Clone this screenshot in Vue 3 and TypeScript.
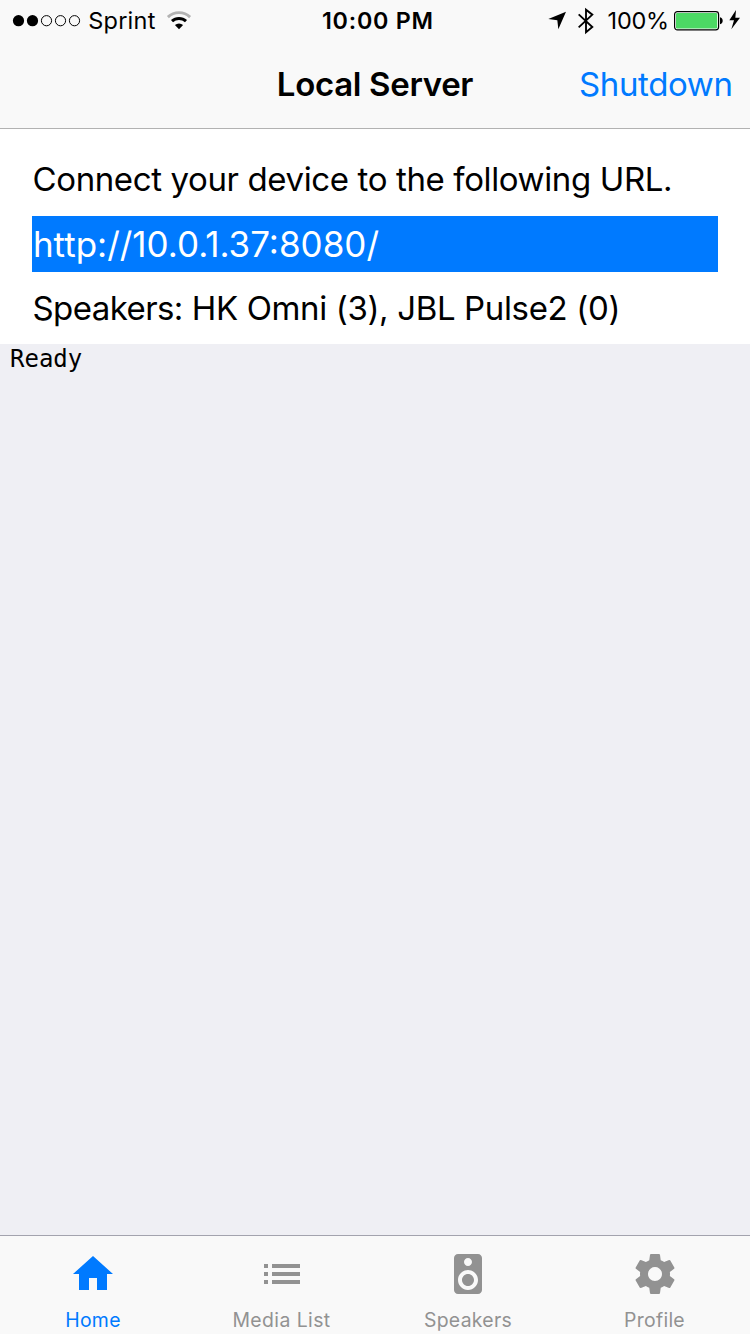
<script setup lang="ts">
import { ref } from 'vue'

interface Tab {
  id: string
  label: string
  icon: string
}

const tabs: Tab[] = [
  { id: 'home', label: 'Home', icon: 'M10 20v-6h4v6h5v-8h3L12 3 2 12h3v8z' },
  {
    id: 'media',
    label: 'Media List',
    icon: 'M3 13h2v-2H3v2zm0 4h2v-2H3v2zm0-8h2V7H3v2zm4 4h14v-2H7v2zm0 4h14v-2H7v2zM7 7v2h14V7H7z',
  },
  {
    id: 'speakers',
    label: 'Speakers',
    icon: 'M17 2H7c-1.1 0-2 .9-2 2v16c0 1.1.9 1.99 2 1.99L17 22c1.1 0 2-.9 2-2V4c0-1.1-.9-2-2-2zm-5 2c1.1 0 2 .9 2 2s-.9 2-2 2c-1.11 0-2-.9-2-2s.89-2 2-2zm0 16c-2.76 0-5-2.24-5-5s2.24-5 5-5 5 2.24 5 5-2.24 5-5 5zm0-8c-1.66 0-3 1.34-3 3s1.34 3 3 3 3-1.34 3-3-1.34-3-3-3z',
  },
  {
    id: 'profile',
    label: 'Profile',
    icon: 'M19.43 12.98c.04-.32.07-.64.07-.98s-.03-.66-.07-.98l2.11-1.65c.19-.15.24-.42.12-.64l-2-3.46c-.12-.22-.39-.3-.61-.22l-2.49 1c-.52-.4-1.08-.73-1.69-.98l-.38-2.65C14.46 2.18 14.25 2 14 2h-4c-.25 0-.46.18-.49.42l-.38 2.65c-.61.25-1.17.59-1.69.98l-2.49-1c-.23-.09-.49 0-.61.22l-2 3.46c-.13.22-.07.49.12.64l2.11 1.65c-.04.32-.07.65-.07.98s.03.66.07.98l-2.11 1.65c-.19.15-.24.42-.12.64l2 3.46c.12.22.39.3.61.22l2.49-1c.52.4 1.08.73 1.69.98l.38 2.65c.03.24.24.42.49.42h4c.25 0 .46-.18.49-.42l.38-2.65c.61-.25 1.17-.59 1.69-.98l2.49 1c.23.09.49 0 .61-.22l2-3.46c.12-.22.07-.49-.12-.64l-2.11-1.65zM12 15.5c-1.93 0-3.5-1.57-3.5-3.5s1.57-3.5 3.5-3.5 3.5 1.57 3.5 3.5-1.57 3.5-3.5 3.5z',
  },
]

const activeTab = ref('home')
const signal = 2
const serverUrl = 'http://10.0.1.37:8080/'
const speakers = [
  { name: 'HK Omni', count: 3 },
  { name: 'JBL Pulse2', count: 0 },
]
const speakerText = speakers.map((s) => `${s.name} (${s.count})`).join(', ')
</script>

<template>
  <div class="screen">
    <header class="top">
      <div class="status">
        <div class="carrier">
          <svg class="dots" width="70" height="14" viewBox="0 0 70 14">
            <circle
              v-for="n in 5"
              :key="n"
              :cx="n * 14 - 7.5"
              cy="6.7"
              :r="n <= signal ? 5.6 : 5.1"
              :class="n <= signal ? 'full' : 'empty'"
            />
          </svg>
          <span class="carrier-name">Sprint</span>
          <svg class="wifi" width="26" height="20" viewBox="0 0 26 20">
            <path d="M1.9 7.1A16 16 0 0 1 24.1 7.1" fill="none" stroke="#b3b3b3" stroke-width="2.9" />
            <path d="M6 11.2A10.3 10.3 0 0 1 20 11.2" fill="none" stroke="#000" stroke-width="3" />
            <path d="M13 19.2L8.9 15.1A5.9 5.9 0 0 1 17.1 15.1Z" fill="#000" />
          </svg>
        </div>
        <span class="time">10:00 PM</span>
        <div class="indicators">
          <svg class="location" width="19" height="19" viewBox="54 34 57 57">
            <path d="M55 58L108 36L85 89L82 62Z" fill="#000" />
          </svg>
          <svg class="bluetooth" width="18" height="28" viewBox="141 20 54 84">
            <path d="M146 42L187 80L168 96V28L187 43L146 81" fill="none" stroke="#000" stroke-width="5.6" />
          </svg>
          <span class="percent">100%</span>
          <svg class="battery" width="50" height="20" viewBox="0 0 50 20">
            <rect x="0.6" y="0.6" width="44" height="18.3" rx="2.8" fill="#fff" stroke="#000" stroke-width="1.2" />
            <rect x="2" y="2" width="41.2" height="15.5" rx="1.2" fill="#4cd964" />
            <path d="M46 6.2C49.6 6.6 49.6 12.8 46 13.2Z" fill="#000" />
          </svg>
          <svg class="bolt" width="12" height="20" viewBox="597 31 36 60">
            <path d="M618 31L598 62H612L604 89L630 54H616Z" fill="#000" />
          </svg>
        </div>
      </div>
      <nav class="navbar">
        <h1 class="title">Local Server</h1>
        <button class="action" type="button">Shutdown</button>
      </nav>
    </header>

    <main class="content">
      <section class="info">
        <p class="line">Connect your device to the following URL.</p>
        <p class="url">{{ serverUrl }}</p>
        <p class="line summary"><span class="caption">Speakers:</span> {{ speakerText }}</p>
      </section>
      <pre class="log">Ready</pre>
    </main>

    <footer class="tabbar">
      <button
        v-for="tab in tabs"
        :key="tab.id"
        type="button"
        :class="['tab', tab.id, { active: tab.id === activeTab }]"
        @click="activeTab = tab.id"
      >
        <svg width="48" height="48" viewBox="0 0 24 24"><path :d="tab.icon" /></svg>
        <span class="label">{{ tab.label }}</span>
      </button>
    </footer>
  </div>
</template>

<style>
body {
  margin: 0;
}
</style>

<style scoped>
.screen {
  display: flex;
  flex-direction: column;
  width: 750px;
  height: 1334px;
  overflow: hidden;
  background: #efeff4;
  color: #000;
  font-family: Inter, "Liberation Sans", sans-serif;
}
.top {
  box-sizing: border-box;
  height: 129px;
  background: #f9f9f9;
  border-bottom: 1px solid #b2b2b2;
}
.status {
  display: grid;
  grid-template-columns: 322px 226px 1fr;
  height: 40px;
  line-height: 40px;
  font-size: 23.5px;
}
.carrier,
.indicators {
  display: flex;
  align-items: center;
  height: 40px;
}
.carrier {
  padding-left: 12px;
}
.dots {
  margin-top: 1px;
}
.full {
  fill: #000;
}
.empty {
  fill: none;
  stroke: #000;
  stroke-width: 1;
}
.carrier-name {
  margin: 2px 0 0 6.2px;
  letter-spacing: 0.25px;
}
.wifi {
  margin-left: 10.2px;
}
.time {
  padding-top: 1px;
  font-size: 23.3px;
  font-weight: 600;
  letter-spacing: 0.75px;
}
.bluetooth {
  margin: 1px 0 0 10px;
}
.location {
  margin-top: 1px;
}
.percent {
  width: 61.4px;
  margin: 2px 0 0 12.6px;
  letter-spacing: -0.25px;
}
.battery {
  margin: 1px 0 0 5px;
}
.bolt {
  margin-left: 5px;
}
.navbar {
  display: grid;
  grid-template-columns: 1fr auto 1fr;
  align-items: center;
  height: 88px;
  line-height: 88px;
  font-size: 33px;
}
.title {
  grid-column: 2;
  margin: 0;
  font-size: 33px;
  font-weight: 600;
  letter-spacing: -0.32px;
}
.action {
  justify-self: end;
  padding: 0 17.4px 0 0;
  border: 0;
  background: none;
  color: #007aff;
  font: inherit;
  letter-spacing: -0.38px;
}
.content {
  flex: 1;
}
.info {
  height: 202px;
  padding: 13px 32px 0;
  background: #fff;
}
.line,
.url {
  margin: 0;
  white-space: nowrap;
}
.line {
  padding-left: 0.5px;
  font-size: 33px;
  line-height: 74px;
  letter-spacing: -0.38px;
}
.url {
  height: 56px;
  padding-left: 0.9px;
  background: #007aff;
  color: #fff;
  font-size: 35px;
  line-height: 56px;
}
.summary {
  line-height: 72px;
  letter-spacing: -0.36px;
}
.caption {
  letter-spacing: -0.57px;
}
.log {
  margin: 0;
  padding: 1px 0 0 10px;
  font: 24px/29px "DejaVu Sans Mono", monospace;
}
.tabbar {
  display: grid;
  grid-template-columns: 186px 191px 182px 191px;
  box-sizing: border-box;
  height: 99px;
  background: #f9f9f9;
  border-top: 1px solid #a3a3ae;
}
.tab {
  display: flex;
  flex-direction: column;
  align-items: center;
  padding: 14px 0 0;
  border: 0;
  background: none;
  color: #929292;
  font: 19.4px/24px Inter, "Liberation Sans", sans-serif;
  letter-spacing: 0.3px;
}
.tab svg {
  fill: currentColor;
}
.label {
  margin-top: 10px;
}
.active {
  color: #007aff;
}
.media {
  letter-spacing: 0.42px;
}
</style>
